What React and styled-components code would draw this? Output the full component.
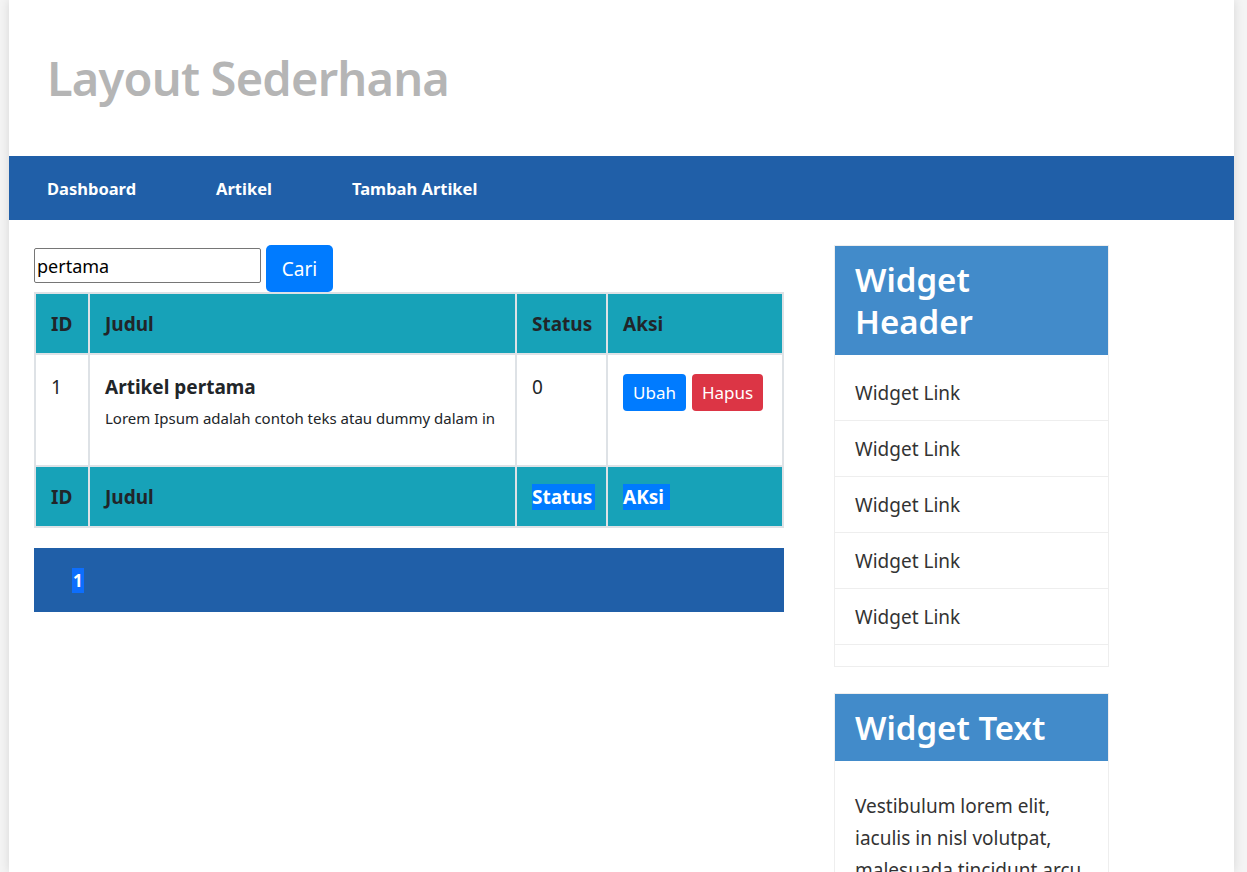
import React, { useState } from 'react'
import styled, { createGlobalStyle } from 'styled-components'

const GlobalStyle = createGlobalStyle`
    html, body {
        margin: 0;
        padding: 0;
        background: #f4f4f4;
        font-family: "Noto Sans", "Open Sans", sans-serif;
        color: #212529;
    }
    * { box-sizing: border-box; }
`;

const Container = styled.div`
    width: 1225px;
    margin-left: 9px;
    height: 872px;
    overflow: hidden;
    background: #fff;
    box-shadow: 0 0 10px rgba(0, 0, 0, 0.12);
`;

const Header = styled.header`
    height: 156px;
    display: flex;
    align-items: center;
    padding-left: 38px;
`;

const Title = styled.h1`
    margin: 0;
    font-size: 47px;
    font-weight: 600;
    color: #b5b5b5;
    letter-spacing: -0.8px;
`;

const Nav = styled.nav`
    height: 64px;
    background: #205fa8;
    display: flex;
    align-items: center;
    padding-left: 38px;
    gap: 80px;
`;

const NavLink = styled.a`
    color: #fff;
    font-weight: 700;
    font-size: 16.5px;
    text-decoration: none;
    cursor: pointer;
`;

const Main = styled.div`
    display: flex;
    gap: 50px;
    padding: 25px 25px 0;
`;

const Content = styled.section`
    width: 750px;
`;

const SearchForm = styled.form`
    display: flex;
    align-items: flex-start;
    gap: 5px;
`;

const SearchInput = styled.input`
    width: 227px;
    height: 35px;
    margin-top: 3px;
    border: 1px solid #767676;
    border-radius: 2px;
    padding: 0 2px;
    font-family: inherit;
    font-size: 18px;
    color: #000;
`;

const SearchButton = styled.button`
    width: 67px;
    height: 47px;
    border: none;
    border-radius: 5px;
    background: #007bff;
    color: #fff;
    font-family: inherit;
    font-size: 19px;
    cursor: pointer;
`;

const Table = styled.table`
    width: 100%;
    table-layout: fixed;
    border-collapse: collapse;
    border: 1px solid #dee2e6;
`;

const Col = styled.col`
    width: ${p => p.$w || 'auto'};
`;

const TH = styled.th`
    background: #17a2b8;
    border: 2px solid #dee2e6;
    height: 61px;
    padding: 0 8px 0 15px;
    text-align: left;
    font-size: 19px;
    font-weight: 700;
    color: #212529;
    white-space: nowrap;
`;

const TD = styled.td`
    border: 2px solid #dee2e6;
    height: 112px;
    padding: 19px 8px 19px 15px;
    vertical-align: top;
    font-size: 19px;
    white-space: nowrap;
`;

const ArticleTitle = styled.div`
    font-weight: 700;
    font-size: 19px;
    margin-bottom: 8px;
`;

const ArticleExcerpt = styled.div`
    font-size: 15px;
`;

const Highlight = styled.span`
    background: #007bff;
    color: #fff;
    padding-right: ${p => p.$pad || 0};
`;

const ActionButton = styled.button`
    height: 37px;
    padding: 0 10px;
    margin-right: 6px;
    border: none;
    border-radius: 4px;
    background: ${p => p.$danger ? '#dc3545' : '#007bff'};
    color: #fff;
    font-family: inherit;
    font-size: 17px;
    cursor: pointer;
`;

const Pagination = styled.div`
    margin-top: 20px;
    height: 64px;
    background: #205fa8;
    display: flex;
    align-items: center;
    padding-left: 38px;
`;

const PageLink = styled.a`
    background: #0d6efd;
    color: #fff;
    font-weight: 700;
    font-size: 17px;
    line-height: 25px;
    padding: 0 1px;
`;

const Sidebar = styled.aside`
    width: 275px;
    display: flex;
    flex-direction: column;
    gap: 26px;
`;

const Widget = styled.div`
    border: 1px solid #eee;
`;

const WidgetHeader = styled.h3`
    margin: 0;
    background: #428bca;
    color: #fff;
    font-size: 33px;
    font-weight: 600;
    line-height: 42px;
    padding: 13px 60px 12px 20px;
`;

const WidgetList = styled.ul`
    list-style: none;
    margin: 0;
    padding: 10px 0 21px;
`;

const WidgetItem = styled.li`
    height: 56px;
    display: flex;
    align-items: center;
    padding-left: 20px;
    border-bottom: 1px solid #eee;
    font-size: 19px;
    color: #333;
`;

const WidgetBody = styled.p`
    margin: 0;
    padding: 29px 20px 20px;
    font-size: 19px;
    line-height: 32px;
    color: #333;
`;

const App = () => {
    const [keyword, setKeyword] = useState('pertama')
    const links = ['Widget Link', 'Widget Link', 'Widget Link', 'Widget Link', 'Widget Link']

    return (
        <>
            <GlobalStyle />
            <Container>
                <Header>
                    <Title>Layout Sederhana</Title>
                </Header>
                <Nav>
                    <NavLink>Dashboard</NavLink>
                    <NavLink>Artikel</NavLink>
                    <NavLink>Tambah Artikel</NavLink>
                </Nav>
                <Main>
                    <Content>
                        <SearchForm onSubmit={e => e.preventDefault()}>
                            <SearchInput value={keyword} onChange={e => setKeyword(e.target.value)} />
                            <SearchButton type="submit">Cari</SearchButton>
                        </SearchForm>
                        <Table>
                            <colgroup>
                                <Col $w="54px" />
                                <Col />
                                <Col $w="91px" />
                                <Col $w="176px" />
                            </colgroup>
                            <thead>
                                <tr>
                                    <TH>ID</TH>
                                    <TH>Judul</TH>
                                    <TH>Status</TH>
                                    <TH>Aksi</TH>
                                </tr>
                            </thead>
                            <tbody>
                                <tr>
                                    <TD>1</TD>
                                    <TD>
                                        <ArticleTitle>Artikel pertama</ArticleTitle>
                                        <ArticleExcerpt>Lorem Ipsum adalah contoh teks atau dummy dalam in</ArticleExcerpt>
                                    </TD>
                                    <TD>0</TD>
                                    <TD>
                                        <ActionButton>Ubah</ActionButton>
                                        <ActionButton $danger>Hapus</ActionButton>
                                    </TD>
                                </tr>
                            </tbody>
                            <tfoot>
                                <tr>
                                    <TH>ID</TH>
                                    <TH>Judul</TH>
                                    <TH><Highlight $pad="3px">Status</Highlight></TH>
                                    <TH><Highlight $pad="6px">AKsi</Highlight></TH>
                                </tr>
                            </tfoot>
                        </Table>
                        <Pagination>
                            <PageLink>1</PageLink>
                        </Pagination>
                    </Content>
                    <Sidebar>
                        <Widget>
                            <WidgetHeader>Widget Header</WidgetHeader>
                            <WidgetList>
                                {links.map((l, i) => <WidgetItem key={i}>{l}</WidgetItem>)}
                            </WidgetList>
                        </Widget>
                        <Widget>
                            <WidgetHeader>Widget Text</WidgetHeader>
                            <WidgetBody>
                                Vestibulum lorem elit, iaculis in nisl volutpat, malesuada tincidunt arcu. Proin in leo fringilla, vestibulum mi porta, faucibus felis. Integer pharetra est nunc, nec pretium nunc pretium ac.
                            </WidgetBody>
                        </Widget>
                    </Sidebar>
                </Main>
            </Container>
        </>
    )
}

export default App
